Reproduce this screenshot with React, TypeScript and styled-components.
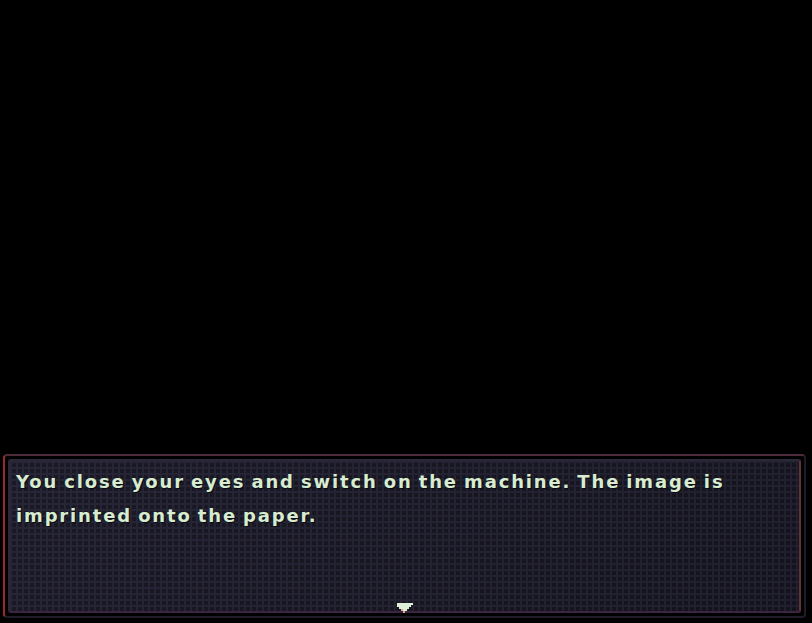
import styled, { createGlobalStyle } from 'styled-components';

const GlobalStyle = createGlobalStyle`
  html, body {
    margin: 0;
    padding: 0;
    background: #000;
  }
  #root {
    height: 100vh;
  }
`;

const Screen = styled.div`
  height: 100%;
  box-sizing: border-box;
  display: flex;
  flex-direction: column;
  justify-content: flex-end;
  padding: 0 6px 5px 3px;
  background: #000;
`;

const Frame = styled.div`
  height: 164px;
  box-sizing: border-box;
  display: flex;
  padding: 3px;
  border: 2px solid;
  border-color: #4d2b3b #1f1c29 #1f1c29 #962a30;
  border-radius: 4px;
`;

const Panel = styled.div`
  position: relative;
  flex: 1;
  box-sizing: border-box;
  padding: 4px 6px 0;
  border: 2px solid;
  border-color: #2b2939 #5e3436 #3d2541 #2b2939;
  border-radius: 3px;
  background-color: #171622;
  background-image: linear-gradient(
      135deg,
      rgba(255, 255, 255, 0.01) 0%,
      rgba(0, 0, 0, 0.15) 100%
    ),
    repeating-linear-gradient(
      90deg,
      #252435 0 2px,
      transparent 2px 6px
    ),
    repeating-linear-gradient(
      180deg,
      #252435 0 2px,
      transparent 2px 6px
    );
`;

const Message = styled.p`
  margin: 0;
  font-family: 'DejaVu Sans', 'Verdana', sans-serif;
  font-weight: bold;
  font-size: 18px;
  letter-spacing: 1.85px;
  word-spacing: -2px;
  line-height: 34px;
  color: #d7ecd0;
  text-shadow: 1px 1px 0 #0b0a12;
`;

const NextArrow = styled.svg`
  position: absolute;
  left: 50%;
  bottom: -2px;
  margin-left: -8px;
  width: 16px;
  height: 10px;
`;

const App = () => {
  return (
    <>
      <GlobalStyle />
      <Screen>
        <Frame>
          <Panel>
            <Message>
              You close your eyes and switch on the machine. The image is
              <br />
              imprinted onto the paper.
            </Message>
            <NextArrow viewBox="0 0 16 10" shapeRendering="crispEdges">
              <path d="M0 0h16v2h-2v2h-2v2h-2v2h-2v2h-2v-2h-2v-2h-2v-2h-2v-2h-2z" fill="#dcefd6" />
              <path d="M4 6h2v2h2v2h-2v-2h-2z" fill="#d8a99a" />
            </NextArrow>
          </Panel>
        </Frame>
      </Screen>
    </>
  );
};

export default App;
